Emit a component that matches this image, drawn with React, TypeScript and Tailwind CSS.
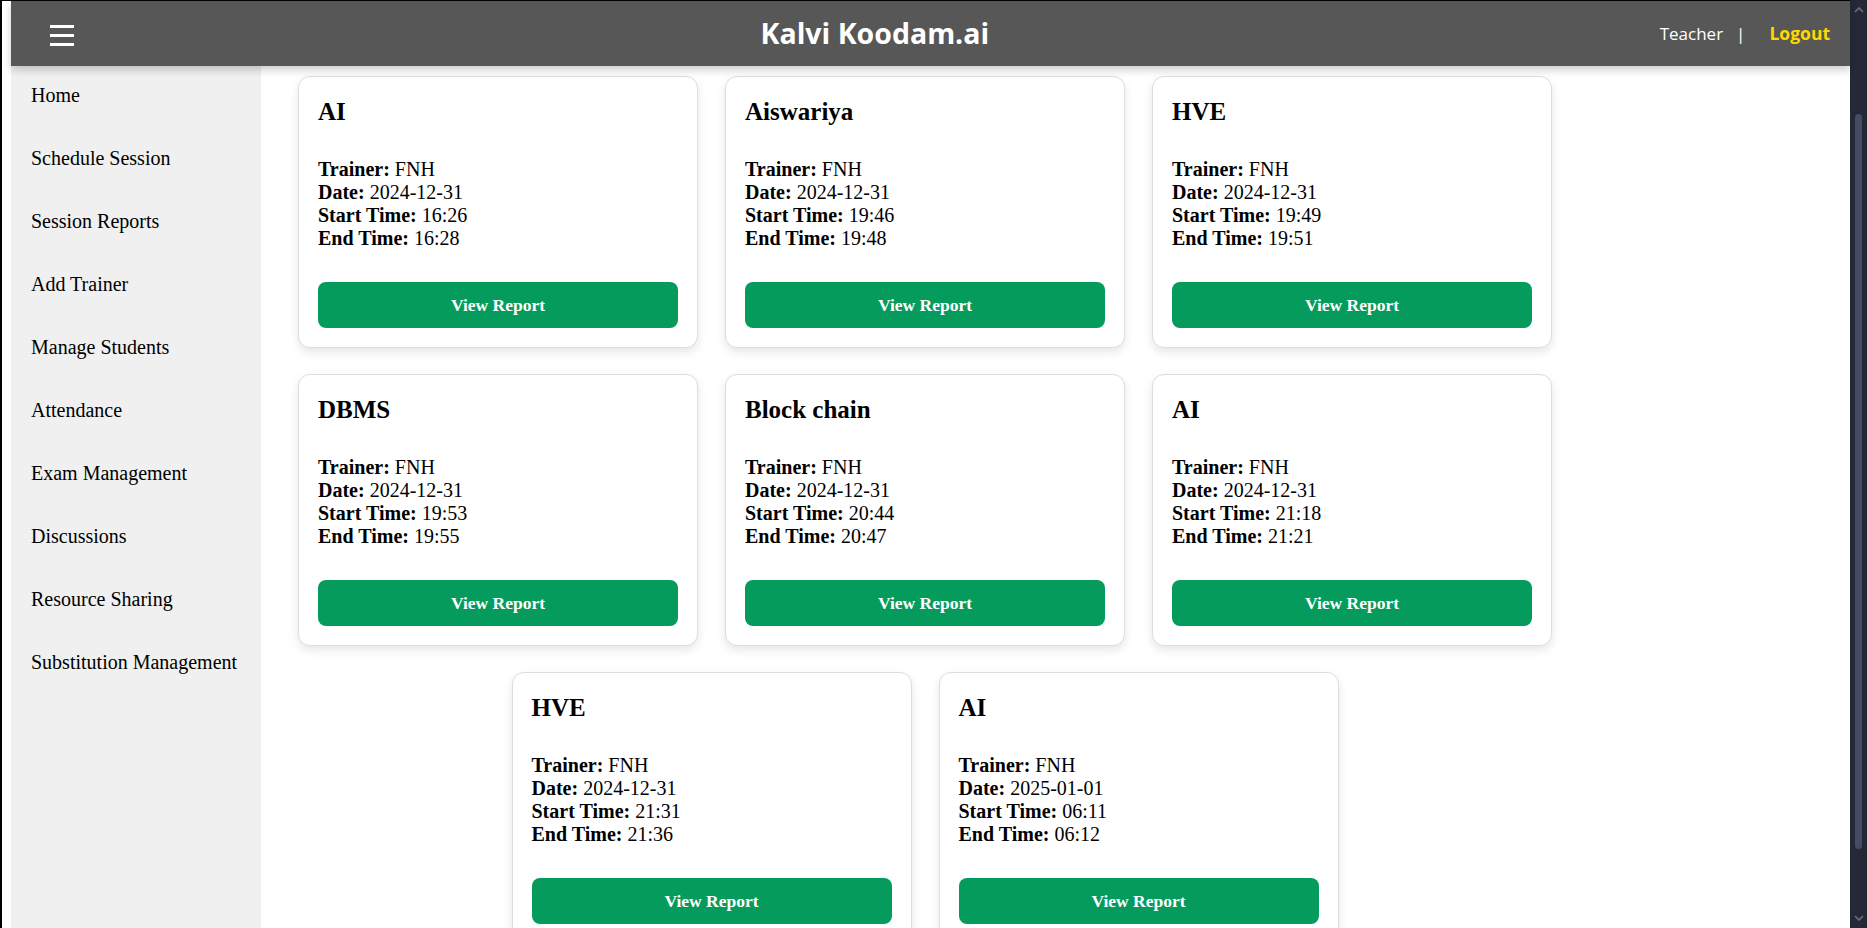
const menu = [
  "Home",
  "Schedule Session",
  "Session Reports",
  "Add Trainer",
  "Manage Students",
  "Attendance",
  "Exam Management",
  "Discussions",
  "Resource Sharing",
  "Substitution Management",
];

const sessions = [
  { name: "AI", date: "2024-12-31", start: "16:26", end: "16:28" },
  { name: "Aiswariya", date: "2024-12-31", start: "19:46", end: "19:48" },
  { name: "HVE", date: "2024-12-31", start: "19:49", end: "19:51" },
  { name: "DBMS", date: "2024-12-31", start: "19:53", end: "19:55" },
  { name: "Block chain", date: "2024-12-31", start: "20:44", end: "20:47" },
  { name: "AI", date: "2024-12-31", start: "21:18", end: "21:21" },
  { name: "HVE", date: "2024-12-31", start: "21:31", end: "21:36" },
  { name: "AI", date: "2025-01-01", start: "06:11", end: "06:12" },
];

function SessionCard({ s }: { s: (typeof sessions)[number] }) {
  return (
    <div className="w-[400px] shrink-0 rounded-[12px] border border-[#dddddd] bg-white px-[19px] pt-5 pb-[19px] shadow-[0_4px_10px_rgba(0,0,0,0.1)]">
      <h3 className="text-[25px] font-bold leading-[29px] text-black">{s.name}</h3>
      <div className="mt-8 text-[20px] leading-[23px] text-black">
        <p><b>Trainer:</b> FNH</p>
        <p><b>Date:</b> {s.date}</p>
        <p><b>Start Time:</b> {s.start}</p>
        <p><b>End Time:</b> {s.end}</p>
      </div>
      <button className="mt-8 h-[46px] w-full rounded-lg bg-[#049b5c] text-[17.5px] font-bold text-white">
        View Report
      </button>
    </div>
  );
}

export default function App() {
  return (
    <div className="flex h-[928px] w-full overflow-hidden bg-black font-['Liberation_Serif',serif]">
      <div className="ml-[2px] mt-[1px] flex min-w-0 flex-1 flex-col bg-white pl-[9px]">
        {/* top bar */}
        <header className="relative z-10 flex h-[65px] shrink-0 items-center justify-between bg-[#575757] pl-[39px] pr-5 font-['Open_Sans',sans-serif] shadow-[0_4px_8px_rgba(0,0,0,0.2)]">
          <div className="mt-[3px] flex w-6 flex-col gap-[6px]">
            <span className="h-[3px] w-6 bg-white"></span>
            <span className="h-[3px] w-6 bg-white"></span>
            <span className="h-[3px] w-6 bg-white"></span>
          </div>
          <h1 className="ml-[16px] text-[28.5px] font-bold text-white">Kalvi Koodam.ai</h1>
          <div className="flex items-center text-white">
            <span className="text-[17px]">Teacher</span>
            <span className="ml-[13px] text-[17px]">|</span>
            <span className="ml-[24px] text-[17.5px] font-bold text-[#ffd700]">Logout</span>
          </div>
        </header>

        <div className="flex min-h-0 flex-1">
          <nav className="flex w-[250px] shrink-0 flex-col gap-[40px] bg-[#f0f0f0] pl-5 pt-[18px]">
            {menu.map((m) => (
              <a key={m} className="text-[20px] leading-[23px] text-black">
                {m}
              </a>
            ))}
          </nav>

          <main className="flex-1 pl-[9px] pt-[10px]">
            <div className="flex w-[1310px] flex-wrap justify-center gap-x-[27px] gap-y-[26px]">
              {sessions.map((s, i) => (
                <SessionCard key={i} s={s} />
              ))}
            </div>
          </main>
        </div>
      </div>

      {/* window scrollbar */}
      <div className="flex w-[17px] shrink-0 flex-col items-center bg-[#252837]">
        <svg width="10" height="6" viewBox="0 0 10 6" className="mt-[7px]">
          <path d="M1 5 L5 1 L9 5" stroke="#6c7084" strokeWidth="1.6" fill="none" />
        </svg>
        <div className="mt-[101px] h-[735px] w-[7px] rounded-full bg-[#474b66]"></div>
        <svg width="10" height="6" viewBox="0 0 10 6" className="mt-auto mb-[7px]">
          <path d="M1 1 L5 5 L9 1" stroke="#6c7084" strokeWidth="1.6" fill="none" />
        </svg>
      </div>
    </div>
  );
}
